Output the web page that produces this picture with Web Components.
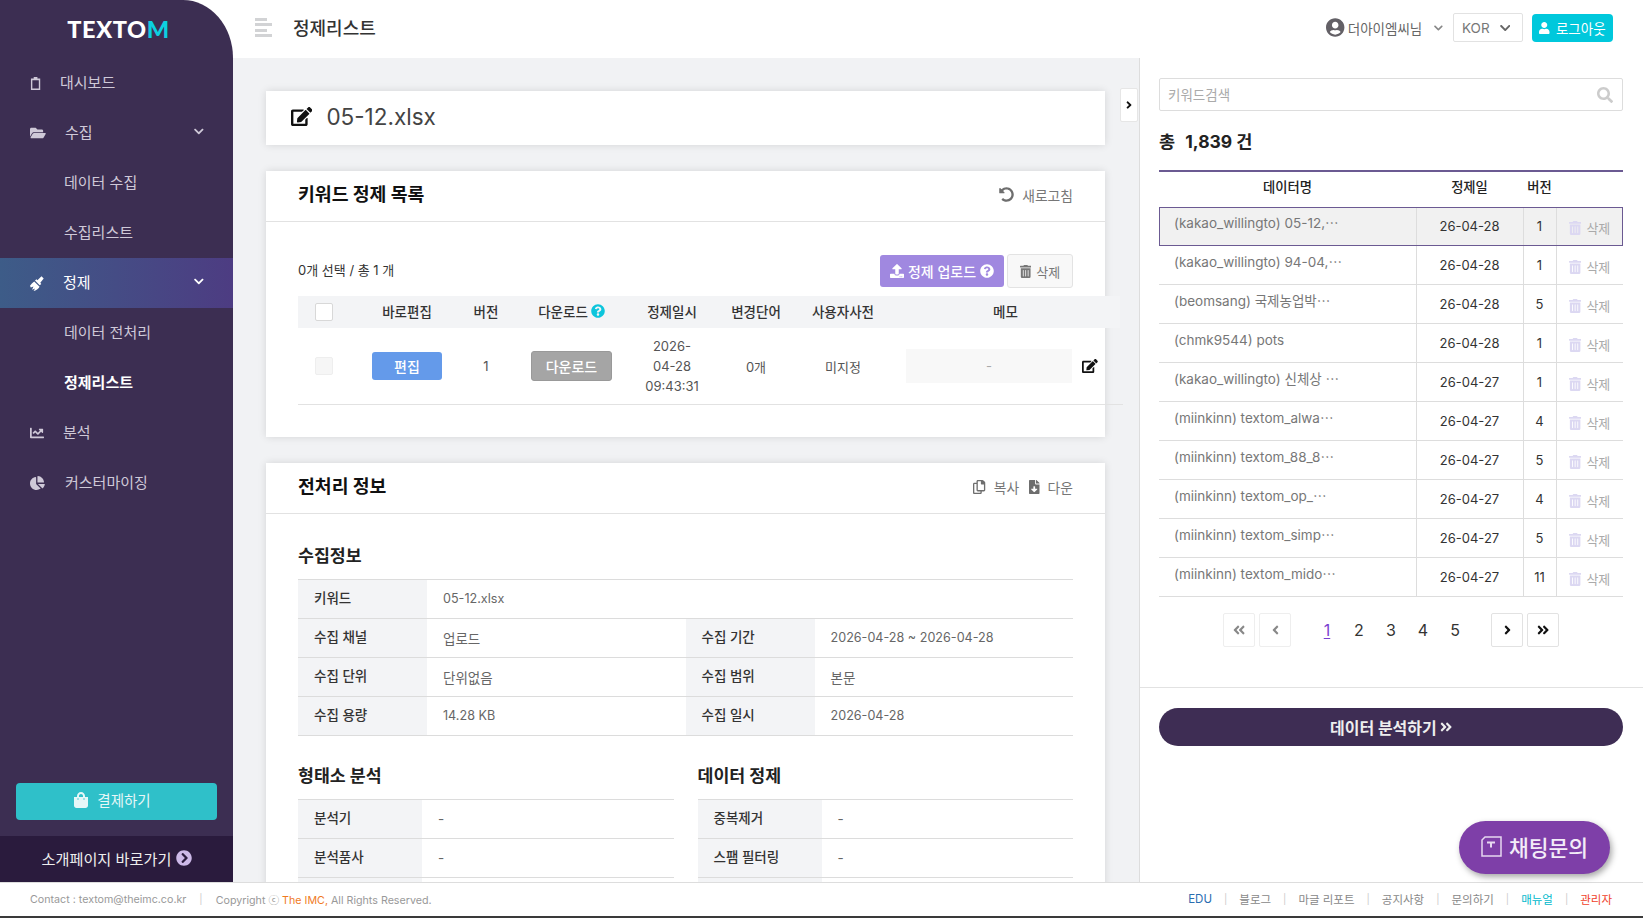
<!DOCTYPE html>
<html lang="ko">
<head>
<meta charset="utf-8">
<title>TEXTOM</title>
<style>
  html, body { margin: 0; padding: 0; background: #fff; }
  body { font-family: Inter, "Noto Sans CJK KR", sans-serif; color: #333; }
</style>
</head>
<body>
<tm-app></tm-app>
<script>
const ICONS = {
  clipboard: ['0 0 24 28', 'M8 3V0h8v3h6v25H2V3zM5 7v18h14V7z'],
  folder: ['0 0 576 512', 'M572.694 292.093L500.27 416.248A63.997 63.997 0 0 1 444.989 448H45.025c-18.523 0-30.064-20.093-20.731-36.093l72.424-124.155A64 64 0 0 1 152 256h399.964c18.523 0 30.064 20.093 20.73 36.093zM152 224h328v-48c0-26.51-21.49-48-48-48H272l-64-64H48C21.49 64 0 85.49 0 112v278.046l69.077-118.418C86.214 242.25 117.989 224 152 224z'],
  broom: ['0 0 16 15', 'M11.5.3l2.2 2.2-3.4 4.2 1 1.2-1.6 1.4L5 4.6 6.4 3.2l1 1zM4.2 5.4l5.4 5.4c-1 2.2-3.8 3.7-6 4.2L5 12.4l-3 1.4L3.5 10.5.8 11.5 0 9.8c1-1.6 2.6-3.4 4.2-4.4z'],
  line: ['0 0 512 512', 'M496 384H64V80c0-8.84-7.16-16-16-16H16C7.16 64 0 71.16 0 80v336c0 17.67 14.33 32 32 32h464c8.84 0 16-7.16 16-16v-32c0-8.84-7.16-16-16-16zM464 96H345.94c-21.38 0-32.09 25.85-16.97 40.97l32.4 32.4L288 242.75l-73.37-73.37c-12.5-12.5-32.76-12.5-45.25 0l-68.69 68.69c-6.25 6.25-6.25 16.38 0 22.63l22.62 22.62c6.25 6.25 16.38 6.25 22.63 0L192 237.25l73.37 73.37c12.5 12.5 32.76 12.5 45.25 0l96-96 32.4 32.4c15.12 15.12 40.97 4.41 40.97-16.97V112c.01-8.84-7.15-16-15.99-16z'],
  pie: ['0 0 544 512', 'M527.79 288H290.5l158.03 158.03c6.04 6.04 15.98 6.53 22.19.68 38.7-36.46 65.32-85.61 73.13-140.86 1.34-9.46-6.51-17.85-16.06-17.85zm-15.83-64.8C503.72 103.74 408.26 8.28 288.8.04 279.68-.59 272 7.1 272 16.24V240h223.77c9.14 0 16.82-7.68 16.19-16.8zM224 288V50.71c0-9.55-8.39-17.4-17.84-16.06C86.99 51.49-4.1 155.6.14 280.37 4.5 408.51 114.83 513.59 243.03 511.98c50.4-.63 96.97-16.87 135.26-44.03 7.9-5.6 8.42-17.23 1.57-24.08L224 288z'],
  chevron: ['0 0 448 512', 'M207.029 381.476L12.686 187.132c-9.373-9.373-9.373-24.569 0-33.941l22.667-22.667c9.357-9.357 24.522-9.375 33.901-.04L224 284.505l154.745-154.021c9.379-9.335 24.544-9.317 33.901.04l22.667 22.667c9.373 9.373 9.373 24.569 0 33.941L240.971 381.476c-9.373 9.372-24.569 9.372-33.942 0z'],
  bag: ['0 0 448 512', 'M352 160v-32C352 57.42 294.579 0 224 0 153.42 0 96 57.42 96 128v32H0v272c0 44.183 35.817 80 80 80h288c44.183 0 80-35.817 80-80V160h-96zm-192-32c0-35.29 28.71-64 64-64s64 28.71 64 64v32H160v-32zm160 120c-13.255 0-24-10.745-24-24s10.745-24 24-24 24 10.745 24 24-10.745 24-24 24zm-192 0c-13.255 0-24-10.745-24-24s10.745-24 24-24 24 10.745 24 24-10.745 24-24 24z'],
  circleRight: ['0 0 512 512', 'M256 8c137 0 248 111 248 248S393 504 256 504 8 393 8 256 119 8 256 8zm113.9 231L234.4 103.5c-9.4-9.4-24.6-9.4-33.9 0l-17 17c-9.4 9.4-9.4 24.6 0 33.9L285.1 256 183.5 357.6c-9.4 9.4-9.4 24.6 0 33.9l17 17c9.4 9.4 24.6 9.4 33.9 0L369.9 273c9.4-9.4 9.4-24.6 0-34z'],
  userCircle: ['0 0 496 512', 'M248 8C111 8 0 119 0 256s111 248 248 248 248-111 248-248S385 8 248 8zm0 96c48.6 0 88 39.4 88 88s-39.4 88-88 88-88-39.4-88-88 39.4-88 88-88zm0 344c-58.7 0-111.3-26.6-146.5-68.2 18.8-35.4 55.6-59.8 98.5-59.8 2.4 0 4.8.4 7.1 1.1 13 4.2 26.6 6.9 40.9 6.9 14.3 0 28-2.7 40.9-6.9 2.3-.7 4.7-1.1 7.1-1.1 42.9 0 79.7 24.4 98.5 59.8C359.3 421.4 306.7 448 248 448z'],
  user: ['0 0 448 512', 'M224 256c70.7 0 128-57.3 128-128S294.7 0 224 0 96 57.3 96 128s57.3 128 128 128zm89.6 32h-16.7c-22.2 10.2-46.9 16-72.9 16s-50.6-5.8-72.9-16h-16.7C60.2 288 0 348.2 0 422.4V464c0 26.5 21.5 48 48 48h352c26.5 0 48-21.5 48-48v-41.6c0-74.2-60.2-134.4-134.4-134.4z'],
  search: ['0 0 512 512', 'M505 442.7L405.3 343c-4.5-4.5-10.6-7-17-7H372c27.6-35.3 44-79.7 44-128C416 93.1 322.9 0 208 0S0 93.1 0 208s93.1 208 208 208c48.3 0 92.7-16.4 128-44v16.3c0 6.4 2.5 12.5 7 17l99.7 99.7c9.4 9.4 24.6 9.4 33.9 0l28.3-28.3c9.4-9.4 9.4-24.6.1-34zM208 336c-70.7 0-128-57.2-128-128 0-70.7 57.2-128 128-128 70.7 0 128 57.2 128 128 0 70.7-57.2 128-128 128z'],
  trash: ['0 0 448 512', 'M32 464a48 48 0 0 0 48 48h288a48 48 0 0 0 48-48V128H32zm272-256a16 16 0 0 1 32 0v224a16 16 0 0 1-32 0zm-96 0a16 16 0 0 1 32 0v224a16 16 0 0 1-32 0zm-96 0a16 16 0 0 1 32 0v224a16 16 0 0 1-32 0zM432 32H312l-9.4-18.7A24 24 0 0 0 281.1 0H166.8a23.72 23.72 0 0 0-21.4 13.3L136 32H16A16 16 0 0 0 0 48v32a16 16 0 0 0 16 16h416a16 16 0 0 0 16-16V48a16 16 0 0 0-16-16z'],
  question: ['0 0 512 512', 'M504 256c0 136.997-111.043 248-248 248S8 392.997 8 256C8 119.083 119.043 8 256 8s248 111.083 248 248zM262.655 90c-54.497 0-89.255 22.957-116.549 63.758-3.536 5.286-2.353 12.415 2.715 16.258l34.699 26.31c5.205 3.947 12.621 3.008 16.665-2.122 17.864-22.658 30.113-35.797 57.303-35.797 20.429 0 45.698 13.148 45.698 32.958 0 14.976-12.363 22.667-32.534 33.976C247.128 238.528 216 254.941 216 296v4c0 6.627 5.373 12 12 12h56c6.627 0 12-5.373 12-12v-1.333c0-28.462 83.186-29.647 83.186-106.667 0-58.002-60.165-102-116.531-102zM256 338c-25.365 0-46 20.635-46 46 0 25.364 20.635 46 46 46s46-20.636 46-46c0-25.365-20.635-46-46-46z'],
  upload: ['0 0 512 512', 'M296 384h-80c-13.3 0-24-10.7-24-24V192h-87.7c-17.8 0-26.7-21.5-14.1-34.1L242.3 5.7c7.5-7.5 19.8-7.5 27.3 0l152.2 152.2c12.6 12.6 3.7 34.1-14.1 34.1H320v168c0 13.3-10.7 24-24 24zm216-8v112c0 13.3-10.7 24-24 24H24c-13.3 0-24-10.7-24-24V376c0-13.3 10.7-24 24-24h136v8c0 30.9 25.1 56 56 56h80c30.9 0 56-25.1 56-56v-8h136c13.3 0 24 10.7 24 24zm-124 88c0-11-9-20-20-20s-20 9-20 20 9 20 20 20 20-9 20-20zm64 0c0-11-9-20-20-20s-20 9-20 20 9 20 20 20 20-9 20-20z'],
  edit: ['0 0 576 512', 'M402.6 83.2l90.2 90.2c3.8 3.8 3.8 10 0 13.8L274.4 405.6l-92.8 10.3c-12.4 1.4-22.9-9.1-21.5-21.5l10.3-92.8L388.8 83.2c3.8-3.8 10-3.8 13.8 0zm162-22.9l-48.8-48.8c-15.2-15.2-39.9-15.2-55.2 0l-35.4 35.4c-3.8 3.8-3.8 10 0 13.8l90.2 90.2c3.8 3.8 10 3.8 13.8 0l35.4-35.4c15.2-15.3 15.2-40 0-55.2zM384 346.2V448H64V128h229.8c3.2 0 6.2-1.3 8.5-3.5l40-40c7.6-7.6 2.2-20.5-8.5-20.5H48C21.5 64 0 85.5 0 112v352c0 26.5 21.5 48 48 48h352c26.5 0 48-21.5 48-48V306.2c0-10.7-12.9-16-20.5-8.5l-40 40c-2.2 2.3-3.5 5.3-3.5 8.5z'],
  fileDown: ['0 0 384 512', 'M224 136V0H24C10.7 0 0 10.7 0 24v464c0 13.3 10.7 24 24 24h336c13.3 0 24-10.7 24-24V160H248c-13.2 0-24-10.8-24-24zm76.45 211.36l-96.42 95.7c-6.65 6.61-17.39 6.61-24.04 0l-96.42-95.7C73.42 337.29 80.54 320 94.82 320H160v-80c0-8.84 7.16-16 16-16h32c8.84 0 16 7.16 16 16v80h65.18c14.28 0 21.4 17.29 11.27 27.36zM377 105L279.1 7c-4.5-4.5-10.6-7-17-7H256v128h128v-6.1c0-6.3-2.5-12.4-7-16.9z'],
  copy: ['0 0 448 512', 'M433.9 65.9l-51.9-51.9A48 48 0 0 0 348.1 0H176c-26.5 0-48 21.5-48 48v48H48c-26.5 0-48 21.5-48 48v320c0 26.5 21.5 48 48 48h224c26.5 0 48-21.5 48-48v-48h80c26.5 0 48-21.5 48-48V99.9a48 48 0 0 0-14.1-34zM266 464H54a6 6 0 0 1-6-6V150a6 6 0 0 1 6-6h74v224c0 26.5 21.5 48 48 48h96v42a6 6 0 0 1-6 6zm128-96H182a6 6 0 0 1-6-6V54a6 6 0 0 1 6-6h106v88c0 13.3 10.7 24 24 24h88v202a6 6 0 0 1-6 6z'],
  undo: ['0 0 512 512', 'M255.545 8c-66.269.119-126.438 26.233-170.86 68.685L48.971 40.971C33.851 25.851 8 36.559 8 57.941V192c0 13.255 10.745 24 24 24h134.059c21.382 0 32.09-25.851 16.971-40.971l-41.75-41.75c30.864-28.899 70.801-44.907 113.23-45.273 92.398-.798 170.283 73.977 169.484 169.442C423.236 348.009 349.816 424 256 424c-41.127 0-79.997-14.678-110.63-41.556-4.743-4.161-11.906-3.908-16.368.553L89.34 422.659c-4.872 4.872-4.631 12.815.482 17.433C133.798 479.813 192.074 504 256 504c136.966 0 247.999-111.033 248-247.998C504.001 119.193 392.354 7.755 255.545 8z'],
  angleRight: ['0 0 256 512', 'M224.3 273l-136 136c-9.4 9.4-24.6 9.4-33.9 0l-22.6-22.6c-9.4-9.4-9.4-24.6 0-33.9l96.4-96.4-96.4-96.4c-9.4-9.4-9.4-24.6 0-33.9L54.3 103c9.4-9.4 24.6-9.4 33.9 0l136 136c9.5 9.4 9.5 24.6.1 34z'],
  angleLeft: ['0 0 256 512', 'M31.7 239l136-136c9.4-9.4 24.6-9.4 33.9 0l22.6 22.6c9.4 9.4 9.4 24.6 0 33.9L127.9 256l96.4 96.4c9.4 9.4 9.4 24.6 0 33.9L201.7 409c-9.4 9.4-24.6 9.4-33.9 0l-136-136c-9.5-9.4-9.5-24.6-.1-34z'],
  doubleRight: ['0 0 448 512', 'M224.3 273l-136 136c-9.4 9.4-24.6 9.4-33.9 0l-22.6-22.6c-9.4-9.4-9.4-24.6 0-33.9l96.4-96.4-96.4-96.4c-9.4-9.4-9.4-24.6 0-33.9L54.3 103c9.4-9.4 24.6-9.4 33.9 0l136 136c9.5 9.4 9.5 24.6.1 34zm192-34l-136-136c-9.4-9.4-24.6-9.4-33.9 0l-22.6 22.6c-9.4 9.4-9.4 24.6 0 33.9l96.4 96.4-96.4 96.4c-9.4 9.4-9.4 24.6 0 33.9l22.6 22.6c9.4 9.4 24.6 9.4 33.9 0l136-136c9.4-9.2 9.4-24.4 0-33.8z'],
  doubleLeft: ['0 0 448 512', 'M223.7 239l136-136c9.4-9.4 24.6-9.4 33.9 0l22.6 22.6c9.4 9.4 9.4 24.6 0 33.9L319.9 256l96.4 96.4c9.4 9.4 9.4 24.6 0 33.9L393.7 409c-9.4 9.4-24.6 9.4-33.9 0l-136-136c-9.5-9.4-9.5-24.6-.1-34zm-192 34l136 136c9.4 9.4 24.6 9.4 33.9 0l22.6-22.6c9.4-9.4 9.4-24.6 0-33.9L127.9 256l96.4-96.4c9.4-9.4 9.4-24.6 0-33.9L201.7 103c-9.4-9.4-24.6-9.4-33.9 0l-136 136c-9.5 9.4-9.5 24.6-.1 34z']
};

// inline svg, sized by its height
function icon(name, h, color) {
  const [box, d] = ICONS[name];
  const p = box.split(' ');
  const w = h * p[2] / p[3];
  return `<svg width="${w}" height="${h}" viewBox="${box}" style="flex:none;display:block" fill="${color || 'currentColor'}"><path fill-rule="evenodd" d="${d}"/></svg>`;
}

const NAV_ICON_H = { clipboard: 13, broom: 15, folder: 14, line: 14, pie: 14 };

class TmNavItem extends HTMLElement {
  connectedCallback() {
    const name = this.getAttribute('icon');
    const sub = this.hasAttribute('sub');
    const shadow = this.attachShadow({ mode: 'open' });
    shadow.innerHTML = `
      <style>
        :host { display: flex; align-items: center; height: 50px; color: #cfc9d8; font-size: 15px; padding-left: 30px; padding-right: 29px; box-sizing: border-box; }
        :host([active]) { color: #fff; background: linear-gradient(90deg, #3d5c88, #4d3c82); }
        :host([current]) { color: #fff; font-weight: 700; }
        .ico { width: var(--label-x, 35px); display: flex; color: #cfc9d8; }
        :host([active]) .ico { color: #fff; }
        .sub { width: 34px; }
        .label { flex: 1; padding-bottom: 4px; }
        .chev { padding-bottom: 4px; }
      </style>
      ${sub ? '<span class="sub"></span>' : `<span class="ico">${icon(name, NAV_ICON_H[name])}</span>`}
      <span class="label"><slot></slot></span>
      ${this.hasAttribute('open') ? `<span class="chev">${icon('chevron', 11)}</span>` : ''}
    `;
  }
}

class TmSidebar extends HTMLElement {
  connectedCallback() {
    const shadow = this.attachShadow({ mode: 'open' });
    shadow.innerHTML = `
      <style>
        :host { display: flex; flex-direction: column; width: 233px; flex: none; background: #3c2e52; border-top-right-radius: 50px 58px; color: #fff; }
        .logo { height: 58px; display: flex; align-items: center; justify-content: center; font: 900 23.5px Lato, sans-serif; letter-spacing: .6px; padding: 0 0 1px 4px; box-sizing: border-box; }
        .logo b { color: #0cd0e0; font-weight: 900; }
        nav { flex: 1; }
        .pay { display: flex; align-items: center; justify-content: center; gap: 9px; height: 37px; margin: 0 16px 16px; padding: 0 8px 4px 0; box-sizing: border-box; background: #2fc0c9; border-radius: 4px; font-size: 14.5px; color: #e6f7f8; }
        .intro { display: flex; align-items: center; justify-content: center; gap: 4px; height: 46px; padding-bottom: 3px; box-sizing: border-box; background: #2a1b3d; font-size: 15.2px; color: #eee; }
      </style>
      <div class="logo"><span>TEXTO<b>M</b></span></div>
      <nav>
        <tm-nav-item icon="clipboard" style="--label-x:30px">대시보드</tm-nav-item>
        <tm-nav-item icon="folder" open>수집</tm-nav-item>
        <tm-nav-item sub>데이터 수집</tm-nav-item>
        <tm-nav-item sub>수집리스트</tm-nav-item>
        <tm-nav-item icon="broom" active open style="--label-x:33px">정제</tm-nav-item>
        <tm-nav-item sub>데이터 전처리</tm-nav-item>
        <tm-nav-item sub current>정제리스트</tm-nav-item>
        <tm-nav-item icon="line" style="--label-x:33px">분석</tm-nav-item>
        <tm-nav-item icon="pie">커스터마이징</tm-nav-item>
      </nav>
      <div class="pay">${icon('bag', 16)}<span>결제하기</span></div>
      <div class="intro"><span>소개페이지 바로가기</span>${icon('circleRight', 16, '#cdb9e8')}</div>
    `;
  }
}

class TmTopbar extends HTMLElement {
  connectedCallback() {
    const shadow = this.attachShadow({ mode: 'open' });
    shadow.innerHTML = `
      <style>
        :host { display: flex; align-items: center; height: 58px; flex: none; background: #fff; padding: 0 30px 3px 22px; box-sizing: border-box; }
        .bars { width: 17px; margin-right: 21px; display: flex; flex-direction: column; gap: 2.5px; }
        .bars i { display: block; height: 3px; background: #d2d3d5; }
        h1 { flex: 1; margin: 0 0 1px; font-size: 18px; font-weight: 500; color: #333; }
        .user { display: flex; align-items: center; gap: 3px; font-size: 13.5px; color: #666; margin-right: 10px; }
        .user .chev { margin-left: 9px; color: #888; }
        .lang { display: flex; align-items: center; justify-content: space-between; width: 70px; height: 29px; padding: 0 12px 0 8px; box-sizing: border-box; border: 1px solid #e2e2e2; border-radius: 2px; font-size: 13.5px; color: #777; margin-right: 9px; }
        .logout { display: flex; align-items: center; justify-content: center; gap: 6px; width: 81px; height: 28px; background: #00c8dc; border-radius: 4px; color: #fff; font-size: 13.5px; }
      </style>
      <div class="bars"><i style="width:12px"></i><i></i><i style="width:12px"></i><i></i></div>
      <h1>정제리스트</h1>
      <div class="user">${icon('userCircle', 19, '#636066')}<span>더아이엠씨님</span><span class="chev">${icon('chevron', 10)}</span></div>
      <div class="lang"><span>KOR</span>${icon('chevron', 12, '#666')}</div>
      <div class="logout">${icon('user', 12)}<span>로그아웃</span></div>
    `;
  }
}

class TmCard extends HTMLElement {
  connectedCallback() {
    const shadow = this.attachShadow({ mode: 'open' });
    shadow.innerHTML = `
      <style>
        :host { display: block; background: #fff; box-shadow: 0 0 8px rgba(0,0,0,.12); margin-bottom: 26px; }
        header { display: flex; align-items: center; justify-content: space-between; height: 51px; padding: 0 32px 3px; box-sizing: border-box; border-bottom: 1px solid #e2e2e2; }
        h2 { margin: 0 0 3px; font-size: 18.3px; font-weight: 700; color: #111; }
        .actions { display: flex; gap: 10px; color: #777; font-size: 13.8px; }
        .body { padding: 32px; }
      </style>
      <header><h2>${this.getAttribute('heading')}</h2><div class="actions"><slot name="actions"></slot></div></header>
      <div class="body"><slot></slot></div>
    `;
  }
}

class TmTool extends HTMLElement {
  connectedCallback() {
    const shadow = this.attachShadow({ mode: 'open' });
    const name = this.getAttribute('icon');
    shadow.innerHTML = `
      <style>
        :host { display: inline-flex; align-items: center; gap: 8px; }
      </style>
      ${icon(name, name === 'undo' ? 15 : 14, '#6e6e6e')}
      <slot></slot>
    `;
  }
}

class TmListTable extends HTMLElement {
  connectedCallback() {
    const shadow = this.attachShadow({ mode: 'open' });
    shadow.innerHTML = `
      <style>
        :host { display: block; font-size: 13px; width: 825px; }
        .tools { display: flex; align-items: center; width: 775px; gap: 3px; margin-bottom: 8px; height: 34px; }
        .count { flex: 1; color: #333; padding-bottom: 3px; }
        .upload { display: flex; align-items: center; justify-content: center; gap: 4px; width: 124px; height: 32px; background: #a088e0; border-radius: 3px; color: #fff; font-size: 14px; font-weight: 500; }
        .del { display: flex; align-items: center; justify-content: center; gap: 5px; width: 66px; height: 34px; box-sizing: border-box; border: 1px solid #e3e3e3; border-radius: 3px; background: #f8f8f8; color: #777; }
        .grid { display: grid; grid-template-columns: 51px 116px 42px 129px 72px 96px 78px 238px; width: 822px; align-items: center; justify-items: center; }
        .head { height: 32px; box-sizing: border-box; padding-bottom: 2px; background: #f3f4f6; color: #333; font-size: 13.5px; font-weight: 500; }
        .head .check { margin-top: 2px; }
        .head .memo-h { padding-left: 9px; }
        .row { height: 76px; width: 825px; grid-template-columns: 51px 116px 42px 129px 72px 96px 78px 241px; border-bottom: 1px solid #e2e2e2; color: #555; font-size: 13px; }
        .check { width: 18px; height: 18px; box-sizing: border-box; background: #fff; border: 1px solid #d8d8d8; border-radius: 2px; justify-self: end; margin-right: 16px; }
        .row .check { background: #f6f6f6; border-color: #eee; }
        .hint { display: inline-flex; align-items: center; gap: 3px; }
        .edit { display: flex; align-items: center; justify-content: center; width: 70px; height: 28px; background: #649aea; border-radius: 3px; color: #fff; font-size: 14px; font-weight: 500; }
        .down { display: flex; align-items: center; justify-content: center; width: 81px; height: 30px; background: #a5a5a5; border: 1px solid #999; box-sizing: border-box; border-radius: 3px; color: #fff; font-size: 14px; font-weight: 500; }
        .date { max-width: 60px; line-height: 20px; text-align: center; }
        .memo { display: flex; align-items: center; gap: 10px; justify-self: start; padding-left: 24px; }
        .memo span { display: flex; align-items: center; justify-content: center; width: 166px; height: 34px; background: #f8f8f8; color: #aaa; }
      </style>
      <div class="tools">
        <span class="count">0개 선택 / 총 1 개</span>
        <span class="upload">${icon('upload', 14)}<span>정제 업로드</span>${icon('question', 14)}</span>
        <span class="del">${icon('trash', 13, '#777')}<span>삭제</span></span>
      </div>
      <div class="grid head">
        <span class="check"></span><span>바로편집</span><span>버전</span>
        <span class="hint">다운로드${icon('question', 14, '#0cc5dc')}</span>
        <span>정제일시</span><span>변경단어</span><span>사용자사전</span><span class="memo-h">메모</span>
      </div>
      <div class="grid row">
        <span class="check"></span><span class="edit">편집</span><span>1</span>
        <span class="down">다운로드</span>
        <span class="date">2026-04-28 09:43:31</span><span>0개</span><span>미지정</span>
        <span class="memo"><span>-</span>${icon('edit', 14, '#111')}</span>
      </div>
    `;
  }
}

// one label/value pair of an info table, label text from the attribute, value slotted
class TmKv extends HTMLElement {
  connectedCallback() {
    const shadow = this.attachShadow({ mode: 'open' });
    shadow.innerHTML = `
      <style>
        :host { display: flex; flex: 1; min-width: 0; height: 38px; font-size: 13.5px; }
        :host([num]) { font-size: 12.6px; }
        .k { display: flex; align-items: center; flex: none; width: var(--label-w, 129px); padding-left: 16px; padding-bottom: 4px; box-sizing: border-box; background: #f3f4f6; color: #333; font-size: 13.5px; font-weight: 500; }
        .v { display: flex; align-items: center; flex: 1; padding-left: 16px; padding-bottom: 1px; box-sizing: border-box; color: #666; }
      </style>
      <div class="k">${this.getAttribute('label') || ''}</div>
      <div class="v"><slot></slot></div>
    `;
  }
}

class TmKvRow extends HTMLElement {
  connectedCallback() {
    const shadow = this.attachShadow({ mode: 'open' });
    shadow.innerHTML = `
      <style>
        :host { display: flex; border-top: 1px solid #dcdcdc; }
        :host(:last-child) { border-bottom: 1px solid #dcdcdc; }
      </style>
      <slot></slot>
    `;
  }
}

class TmSection extends HTMLElement {
  connectedCallback() {
    const shadow = this.attachShadow({ mode: 'open' });
    shadow.innerHTML = `
      <style>
        :host { display: block; flex: 1; min-width: 0; }
        h3 { margin: -2px 0 11px; height: 24px; line-height: 24px; font-size: 17.3px; font-weight: 700; color: #222; }
      </style>
      <h3>${this.getAttribute('heading')}</h3>
      <slot></slot>
    `;
  }
}

class TmPage extends HTMLElement {
  connectedCallback() {
    const shadow = this.attachShadow({ mode: 'open' });
    shadow.innerHTML = `
      <style>
        :host { display: block; flex: 1; min-width: 0; background: #f1f2f4; padding: 33px 34px 0 33px; overflow: hidden; }
        .title { display: flex; align-items: center; gap: 14px; height: 54px; padding: 0 25px 4px; margin-bottom: 26px; background: #fff; box-shadow: 0 0 8px rgba(0,0,0,.12); box-sizing: border-box; font-size: 22.5px; color: #444; }
        .pair { display: flex; gap: 24px; margin-top: 30px; --label-w: 124px; }
      </style>
      <div class="title">${icon('edit', 19, '#111')}<span>05-12.xlsx</span></div>
      <tm-card heading="키워드 정제 목록">
        <tm-tool slot="actions" icon="undo">새로고침</tm-tool>
        <tm-list-table></tm-list-table>
      </tm-card>
      <tm-card heading="전처리 정보">
        <tm-tool slot="actions" icon="copy">복사</tm-tool>
        <tm-tool slot="actions" icon="fileDown">다운</tm-tool>
        <tm-section heading="수집정보">
          <tm-kv-row><tm-kv label="키워드" num>05-12.xlsx</tm-kv></tm-kv-row>
          <tm-kv-row><tm-kv label="수집 채널">업로드</tm-kv><tm-kv label="수집 기간" num>2026-04-28 ~ 2026-04-28</tm-kv></tm-kv-row>
          <tm-kv-row><tm-kv label="수집 단위">단위없음</tm-kv><tm-kv label="수집 범위">본문</tm-kv></tm-kv-row>
          <tm-kv-row><tm-kv label="수집 용량" num>14.28 KB</tm-kv><tm-kv label="수집 일시" num>2026-04-28</tm-kv></tm-kv-row>
        </tm-section>
        <div class="pair">
          <tm-section heading="형태소 분석">
            <tm-kv-row><tm-kv label="분석기">-</tm-kv></tm-kv-row>
            <tm-kv-row><tm-kv label="분석품사">-</tm-kv></tm-kv-row>
            <tm-kv-row><tm-kv></tm-kv></tm-kv-row>
          </tm-section>
          <tm-section heading="데이터 정제">
            <tm-kv-row><tm-kv label="중복제거">-</tm-kv></tm-kv-row>
            <tm-kv-row><tm-kv label="스팸 필터링">-</tm-kv></tm-kv-row>
            <tm-kv-row><tm-kv></tm-kv></tm-kv-row>
          </tm-section>
        </div>
      </tm-card>
    `;
  }
}

const FILES = [
  ['(kakao_willingto) 05-12,⋯', '26-04-28', 1],
  ['(kakao_willingto) 94-04,⋯', '26-04-28', 1],
  ['(beomsang) 국제농업박⋯', '26-04-28', 5],
  ['(chmk9544) pots', '26-04-28', 1],
  ['(kakao_willingto) 신체상 ⋯', '26-04-27', 1],
  ['(miinkinn) textom_alwa⋯', '26-04-27', 4],
  ['(miinkinn) textom_88_8⋯', '26-04-27', 5],
  ['(miinkinn) textom_op_⋯', '26-04-27', 4],
  ['(miinkinn) textom_simp⋯', '26-04-27', 5],
  ['(miinkinn) textom_mido⋯', '26-04-27', 11]
];

class TmSidePanel extends HTMLElement {
  connectedCallback() {
    const shadow = this.attachShadow({ mode: 'open' });
    const rows = FILES.map((f, i) => `
      <tr class="${i === 0 ? 'sel' : ''}">
        <td class="name">${f[0]}</td><td>${f[1]}</td><td>${f[2]}</td>
        <td class="del"><span>${icon('trash', 14, '#dcd8f2')}삭제</span></td>
      </tr>`).join('');
    shadow.innerHTML = `
      <style>
        :host { display: block; flex: none; width: 504px; box-sizing: border-box; background: #fff; border-left: 1px solid #ddd; color: #333; }
        .top { padding: 20px 20px 40px 19px; }
        .search { display: flex; align-items: center; justify-content: space-between; height: 33px; padding: 0 9px 0 8px; box-sizing: border-box; border: 1px solid #ddd; border-radius: 2px; color: #aaa; font-size: 13.5px; }
        .search span { padding-bottom: 2px; }
        .total { margin: 19px 0 16px; height: 24px; line-height: 24px; font-size: 17.5px; font-weight: 700; color: #222; }
        .total span { margin-left: 6px; }
        table { width: 464px; border-collapse: collapse; table-layout: fixed; border-top: 2px solid #6b5a92; font-size: 13px; }
        th { height: 29px; padding: 0 0 6px; font-size: 13.3px; font-weight: 500; color: #222; }
        td { height: 38px; padding: 0; text-align: center; border-left: 1px solid #ddd; border-bottom: 1px solid #ddd; color: #333; }
        td:first-child { border-left: 0; }
        td.name { text-align: left; vertical-align: top; padding: 5px 0 0 15px; height: 33px; color: #777; line-height: 22px; font-size: 13.5px; }
        td.del span { display: flex; align-items: center; justify-content: center; gap: 5px; color: #aaa; font-size: 13px; padding-top: 3px; }
        tr.sel td { background: #f1f1f1; border-bottom-color: #6b5a92; }
        tr.sel { outline: 1px solid #6b5a92; outline-offset: -1px; }
        .pager { display: flex; justify-content: center; gap: 4px; margin-top: 16px; }
        .pager a { display: flex; align-items: center; justify-content: center; width: 32px; height: 34px; box-sizing: border-box; border: 1px solid #e2e2e2; border-radius: 2px; color: #111; }
        .pager a.off { color: #888; border-color: #eee; }
        .nums { display: flex; margin: 0 16px; font-size: 16px; }
        .nums span { display: flex; align-items: center; justify-content: center; width: 32px; height: 34px; color: #333; }
        .nums .now { color: #7a3fd0; }
        .nums .now u { text-underline-offset: 2px; }
        .bottom { padding: 20px 20px 0 19px; border-top: 1px solid #e2e2e2; }
        .go { display: flex; align-items: center; justify-content: center; gap: 3px; height: 38px; padding-bottom: 1px; box-sizing: border-box; border-radius: 19px; background: #3e2d54; color: #eee; font-size: 16px; font-weight: 700; }
      </style>
      <div class="top">
        <div class="search"><span>키워드검색</span>${icon('search', 16, '#ccc')}</div>
        <div class="total">총 <span>1,839 건</span></div>
        <table>
          <colgroup><col style="width:257px"><col style="width:107px"><col style="width:33px"><col></colgroup>
          <thead><tr><th>데이터명</th><th>정제일</th><th>버전</th><th></th></tr></thead>
          <tbody>${rows}</tbody>
        </table>
        <div class="pager">
          <a class="off">${icon('doubleLeft', 14)}</a><a class="off">${icon('angleLeft', 14)}</a>
          <div class="nums"><span class="now"><u>1</u></span><span>2</span><span>3</span><span>4</span><span>5</span></div>
          <a>${icon('angleRight', 14)}</a><a>${icon('doubleRight', 14)}</a>
        </div>
      </div>
      <div class="bottom"><div class="go"><span>데이터 분석하기</span>${icon('doubleRight', 14)}</div></div>
    `;
  }
}

class TmFooter extends HTMLElement {
  connectedCallback() {
    const shadow = this.attachShadow({ mode: 'open' });
    shadow.innerHTML = `
      <style>
        :host { display: flex; align-items: center; flex: none; height: 36px; padding: 0 31px 1px 30px; box-sizing: border-box; background: #fff; border-top: 1px solid #ddd; border-bottom: 2px solid #3a3a3a; color: #999; }
        .left { flex: 1; display: flex; align-items: center; font-size: 10.7px; }
        .left .sep { margin: 0 13px; }
        .sep { color: #ccc; margin: 0 12px; font-size: 10px; }
        .imc { color: #f07a1e; }
        .links { display: flex; align-items: center; color: #888; font-size: 11.5px; }
      </style>
      <div class="left"><span>Contact : textom@theimc.co.kr</span><span class="sep">|</span><span>Copyright ⓒ <span class="imc">The IMC,</span> All Rights Reserved.</span></div>
      <div class="links">
        <span style="color:#2a6db0">EDU</span><span class="sep">|</span><span>블로그</span><span class="sep">|</span><span>마글 리포트</span><span class="sep">|</span><span>공지사항</span><span class="sep">|</span><span>문의하기</span><span class="sep">|</span><span style="color:#00b9cc">매뉴얼</span><span class="sep">|</span><span style="color:#f0412a">관리자</span>
      </div>
    `;
  }
}

class TmChat extends HTMLElement {
  connectedCallback() {
    const shadow = this.attachShadow({ mode: 'open' });
    shadow.innerHTML = `
      <style>
        :host { position: absolute; right: 33px; bottom: 44px; display: flex; align-items: center; justify-content: center; gap: 7px; width: 151px; height: 53px; padding-bottom: 2px; box-sizing: border-box; border-radius: 27px; background: #7e3fa8; color: #f3ecf8; font-size: 21.5px; font-weight: 500; box-shadow: 2px 3px 6px rgba(0,0,0,.35); }
      </style>
      <svg width="21" height="21" viewBox="0 0 21 21" fill="none" stroke="#e6d8f0" stroke-width="1.5"><path d="M4 1h16v19H1V4z"/><path d="M6 6.5h8M10 6.5v5" stroke-width="2"/></svg>
      <span>채팅문의</span>
    `;
  }
}

class TmApp extends HTMLElement {
  connectedCallback() {
    const shadow = this.attachShadow({ mode: 'open' });
    shadow.innerHTML = `
      <style>
        :host { display: flex; flex-direction: column; position: relative; height: 918px; overflow: hidden; }
        .shell { flex: 1; min-height: 0; display: flex; }
        .right { flex: 1; min-width: 0; display: flex; flex-direction: column; }
        .content { flex: 1; min-height: 0; display: flex; position: relative; }
        .toggle { position: absolute; left: 887px; top: 30px; display: flex; align-items: center; justify-content: center; width: 18px; height: 34px; background: #fff; border: 1px solid #e6e6e6; border-radius: 2px; box-sizing: border-box; color: #111; }
      </style>
      <div class="shell">
        <tm-sidebar></tm-sidebar>
        <div class="right">
          <tm-topbar></tm-topbar>
          <div class="content">
            <tm-page></tm-page>
            <tm-side-panel></tm-side-panel>
            <div class="toggle">${icon('angleRight', 12)}</div>
          </div>
        </div>
      </div>
      <tm-footer></tm-footer>
      <tm-chat></tm-chat>
    `;
  }
}

customElements.define('tm-nav-item', TmNavItem);
customElements.define('tm-sidebar', TmSidebar);
customElements.define('tm-topbar', TmTopbar);
customElements.define('tm-card', TmCard);
customElements.define('tm-tool', TmTool);
customElements.define('tm-list-table', TmListTable);
customElements.define('tm-kv', TmKv);
customElements.define('tm-kv-row', TmKvRow);
customElements.define('tm-section', TmSection);
customElements.define('tm-page', TmPage);
customElements.define('tm-side-panel', TmSidePanel);
customElements.define('tm-footer', TmFooter);
customElements.define('tm-chat', TmChat);
customElements.define('tm-app', TmApp);
</script>
</body>
</html>
